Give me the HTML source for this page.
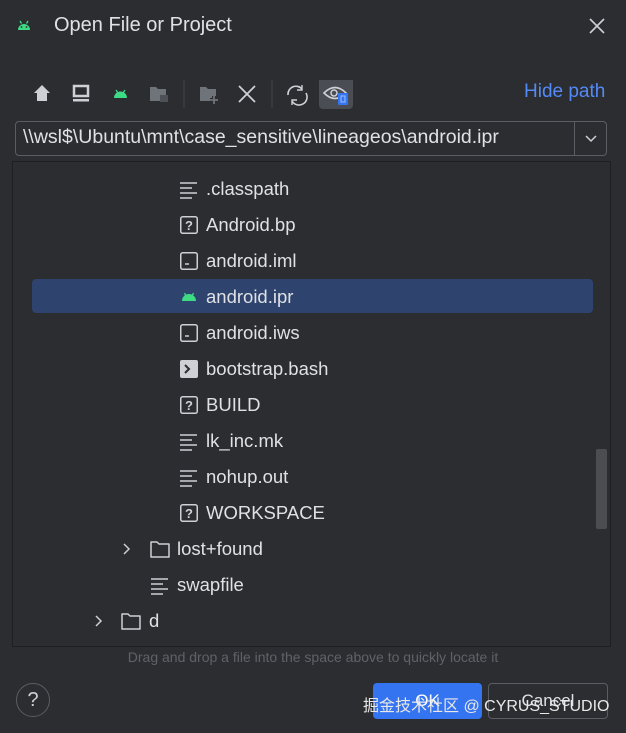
<!DOCTYPE html>
<html><head><meta charset="utf-8"><style>
*{margin:0;padding:0;box-sizing:border-box}
body{width:626px;height:733px;background:#2b2d30;font-family:"Liberation Sans","Noto Sans CJK SC",sans-serif;color:#dfe1e5;position:relative;overflow:hidden}
.a{position:absolute}
.row{position:absolute;height:36px;line-height:36px;font-size:18.5px;white-space:nowrap}
.ic{position:absolute;top:9px}
</style></head><body>
<svg class="a" style="left:16px;top:19px" width="16" height="12" viewBox="0 0 16 12"><path d="M2 11 A6 6 0 0 1 14 11Z" fill="#3ddc84"/><path d="M4 2 L5.5 4.5 M12 2 L10.5 4.5" stroke="#3ddc84" stroke-width="1.3"/><circle cx="5.5" cy="8" r="0.9" fill="#2b2d30"/><circle cx="10.5" cy="8" r="0.9" fill="#2b2d30"/></svg>
<div class="a" style="left:54px;top:14px;font-size:20px;color:#dfe1e5">Open File or Project</div>
<svg class="a" style="left:589px;top:18px" width="16" height="16"><path d="M1 1L15 15M15 1L1 15" stroke="#ced0d6" stroke-width="1.6"/></svg>

<svg class="a" style="left:26px;top:80px" width="340" height="30">
<path d="M8 13 L16 5 L24 13 H21 V21 H11 V13Z" fill="#ced0d6"/>
<rect x="48" y="6" width="14" height="10" fill="none" stroke="#ced0d6" stroke-width="2.5"/><rect x="47" y="19" width="16" height="2.5" fill="#ced0d6"/>
<path d="M88 18 A6 6 0 0 1 101 18Z" fill="#3ddc84"/><path d="M90 10 L92 13 M99 10 L97 13" stroke="#3ddc84" stroke-width="1.3"/>
<path d="M124 7 H130 L132 9 H140 V21 H124Z" fill="#6f737a"/><rect x="134" y="15" width="8" height="7" fill="#4e5157"/>
<line x1="158" y1="0" x2="158" y2="28" stroke="#43454a"/>
<path d="M174 7 H180 L182 9 H190 V21 H174Z" fill="#6f737a"/><path d="M188 16 V24 M184 20 H192" stroke="#2b2d30" stroke-width="4"/><path d="M188 16 V24 M184 20 H192" stroke="#6f737a" stroke-width="1.8"/>
<path d="M213 6 L229 22 M229 6 L213 22" stroke="#ced0d6" stroke-width="1.8"/>
<line x1="246" y1="0" x2="246" y2="28" stroke="#43454a"/>
<path d="M262 15 A8 8 0 0 1 276 9 M280 13 A8 8 0 0 1 266 21" fill="none" stroke="#ced0d6" stroke-width="1.6"/><path d="M276 5 V10 H271 M266 25 V20 H271" fill="none" stroke="#ced0d6" stroke-width="1.4"/>
<rect x="293" y="-4" width="34" height="33" rx="4" fill="#4a4d53"/>
<path d="M298 13 Q309 2 320 13 Q309 24 298 13Z" fill="none" stroke="#ced0d6" stroke-width="1.6"/><circle cx="308" cy="13" r="3" fill="none" stroke="#ced0d6" stroke-width="1.5"/><rect x="312" y="13" width="10" height="12" rx="1" fill="#3574f0"/><rect x="315" y="16" width="4" height="6" fill="none" stroke="#9cc0ff"/>
</svg>
<div class="a" style="left:524px;top:81px;font-size:19px;color:#548af7">Hide path</div>

<div class="a" style="left:15px;top:121px;width:592px;height:35px;border:1px solid #5a5d63;border-radius:4px;background:#2b2d30"></div>
<div class="a" style="left:574px;top:122px;width:1px;height:33px;background:#5a5d63"></div>
<div class="a" style="left:23px;top:126px;font-size:19.5px;color:#dfe1e5">\\wsl$\Ubuntu\mnt\case_sensitive\lineageos\android.ipr</div>
<svg class="a" style="left:584px;top:134px" width="14" height="10"><path d="M2 2 L7 7 L12 2" fill="none" stroke="#ced0d6" stroke-width="1.5"/></svg>

<div class="a" style="left:12px;top:161px;width:599px;height:486px;border:1px solid #1e1f22;background:#2b2d30"></div>
<div class="a" style="left:32px;top:279px;width:561px;height:34px;background:#2e436e;border-radius:4px"></div>
<div class="a" style="left:596px;top:449px;width:11px;height:80px;background:#4b4d51;border-radius:2px"></div>

<svg width="0" height="0" style="position:absolute"><defs>
<g id="txt"><path d="M0 2H17M0 7H12M0 12H17M0 17H12" stroke="#ced0d6" stroke-width="1.6"/></g>
<g id="q"><rect x="0.75" y="0.75" width="16.5" height="16.5" rx="2" fill="none" stroke="#ced0d6" stroke-width="1.5"/><text x="9" y="14" font-size="13" font-weight="bold" fill="#ced0d6" text-anchor="middle" font-family="Liberation Sans">?</text></g>
<g id="iml"><rect x="0.75" y="0.75" width="16.5" height="16.5" rx="2" fill="none" stroke="#ced0d6" stroke-width="1.5"/><path d="M5 12H9" stroke="#ced0d6" stroke-width="1.5"/></g>
<g id="fold"><path d="M1 2 H7 L9 4 H19 V17 H1Z" fill="none" stroke="#ced0d6" stroke-width="1.5" stroke-linejoin="round"/></g>
</defs></svg>

<div class="row" style="left:180px;top:171px"><svg class="ic" style="left:0;top:10px" width="18" height="18"><use href="#txt"/></svg><span style="position:absolute;left:26px">.classpath</span></div>
<div class="row" style="left:180px;top:207px"><svg class="ic" style="left:0" width="18" height="18"><use href="#q"/></svg><span style="position:absolute;left:26px">Android.bp</span></div>
<div class="row" style="left:180px;top:243px"><svg class="ic" style="left:0" width="18" height="18"><use href="#iml"/></svg><span style="position:absolute;left:26px">android.iml</span></div>
<div class="row" style="left:180px;top:279px"><svg class="ic" style="left:1px;top:12px" width="16" height="12"><path d="M1 10 A7 7 0 0 1 15 10Z" fill="#3ddc84"/><path d="M3.5 2 L5 5 M12.5 2 L11 5" stroke="#3ddc84" stroke-width="1.3"/></svg><span style="position:absolute;left:26px">android.ipr</span></div>
<div class="row" style="left:180px;top:315px"><svg class="ic" style="left:0" width="18" height="18"><use href="#iml"/></svg><span style="position:absolute;left:26px">android.iws</span></div>
<div class="row" style="left:180px;top:351px"><svg class="ic" style="left:0" width="18" height="18"><rect width="18" height="18" rx="2" fill="#ced0d6"/><path d="M5 5 L9 9 L5 13" fill="none" stroke="#2b2d30" stroke-width="2"/></svg><span style="position:absolute;left:26px">bootstrap.bash</span></div>
<div class="row" style="left:180px;top:387px"><svg class="ic" style="left:0" width="18" height="18"><use href="#q"/></svg><span style="position:absolute;left:26px">BUILD</span></div>
<div class="row" style="left:180px;top:423px"><svg class="ic" style="left:0;top:10px" width="18" height="18"><use href="#txt"/></svg><span style="position:absolute;left:26px">lk_inc.mk</span></div>
<div class="row" style="left:180px;top:459px"><svg class="ic" style="left:0;top:10px" width="18" height="18"><use href="#txt"/></svg><span style="position:absolute;left:26px">nohup.out</span></div>
<div class="row" style="left:180px;top:495px"><svg class="ic" style="left:0" width="18" height="18"><use href="#q"/></svg><span style="position:absolute;left:26px">WORKSPACE</span></div>
<div class="row" style="left:122px;top:531px"><svg class="ic" style="left:0;top:12px" width="10" height="12"><path d="M2 1 L7 6 L2 11" fill="none" stroke="#ced0d6" stroke-width="1.5"/></svg><svg class="ic" style="left:28px" width="20" height="19"><use href="#fold"/></svg><span style="position:absolute;left:55px">lost+found</span></div>
<div class="row" style="left:151px;top:567px"><svg class="ic" style="left:0;top:10px" width="18" height="18"><use href="#txt"/></svg><span style="position:absolute;left:26px">swapfile</span></div>
<div class="row" style="left:94px;top:603px"><svg class="ic" style="left:0;top:12px" width="10" height="12"><path d="M2 1 L7 6 L2 11" fill="none" stroke="#ced0d6" stroke-width="1.5"/></svg><svg class="ic" style="left:27px" width="20" height="19"><use href="#fold"/></svg><span style="position:absolute;left:55px">d</span></div>

<div class="a" style="left:0;width:626px;top:649px;text-align:center;font-size:14px;color:#5f6268">Drag and drop a file into the space above to quickly locate it</div>

<div class="a" style="left:16px;top:683px;width:34px;height:34px;border:1px solid #5a5d63;border-radius:50%;text-align:center;line-height:32px;font-size:20px;color:#ced0d6">?</div>
<div class="a" style="left:373px;top:683px;width:109px;height:36px;background:#3574f0;border-radius:4px;text-align:center;line-height:36px;font-size:17px;color:#fff">OK</div>
<div class="a" style="left:488px;top:683px;width:120px;height:36px;border:1px solid #5a5d63;border-radius:4px;text-align:center;line-height:34px;font-size:17px;color:#dfe1e5">Cancel</div>
<div class="a" style="left:363px;top:692px;font-size:16px;color:#e8e8e8;white-space:nowrap">掘金技术社区 @ CYRUS_STUDIO</div>
</body></html>
